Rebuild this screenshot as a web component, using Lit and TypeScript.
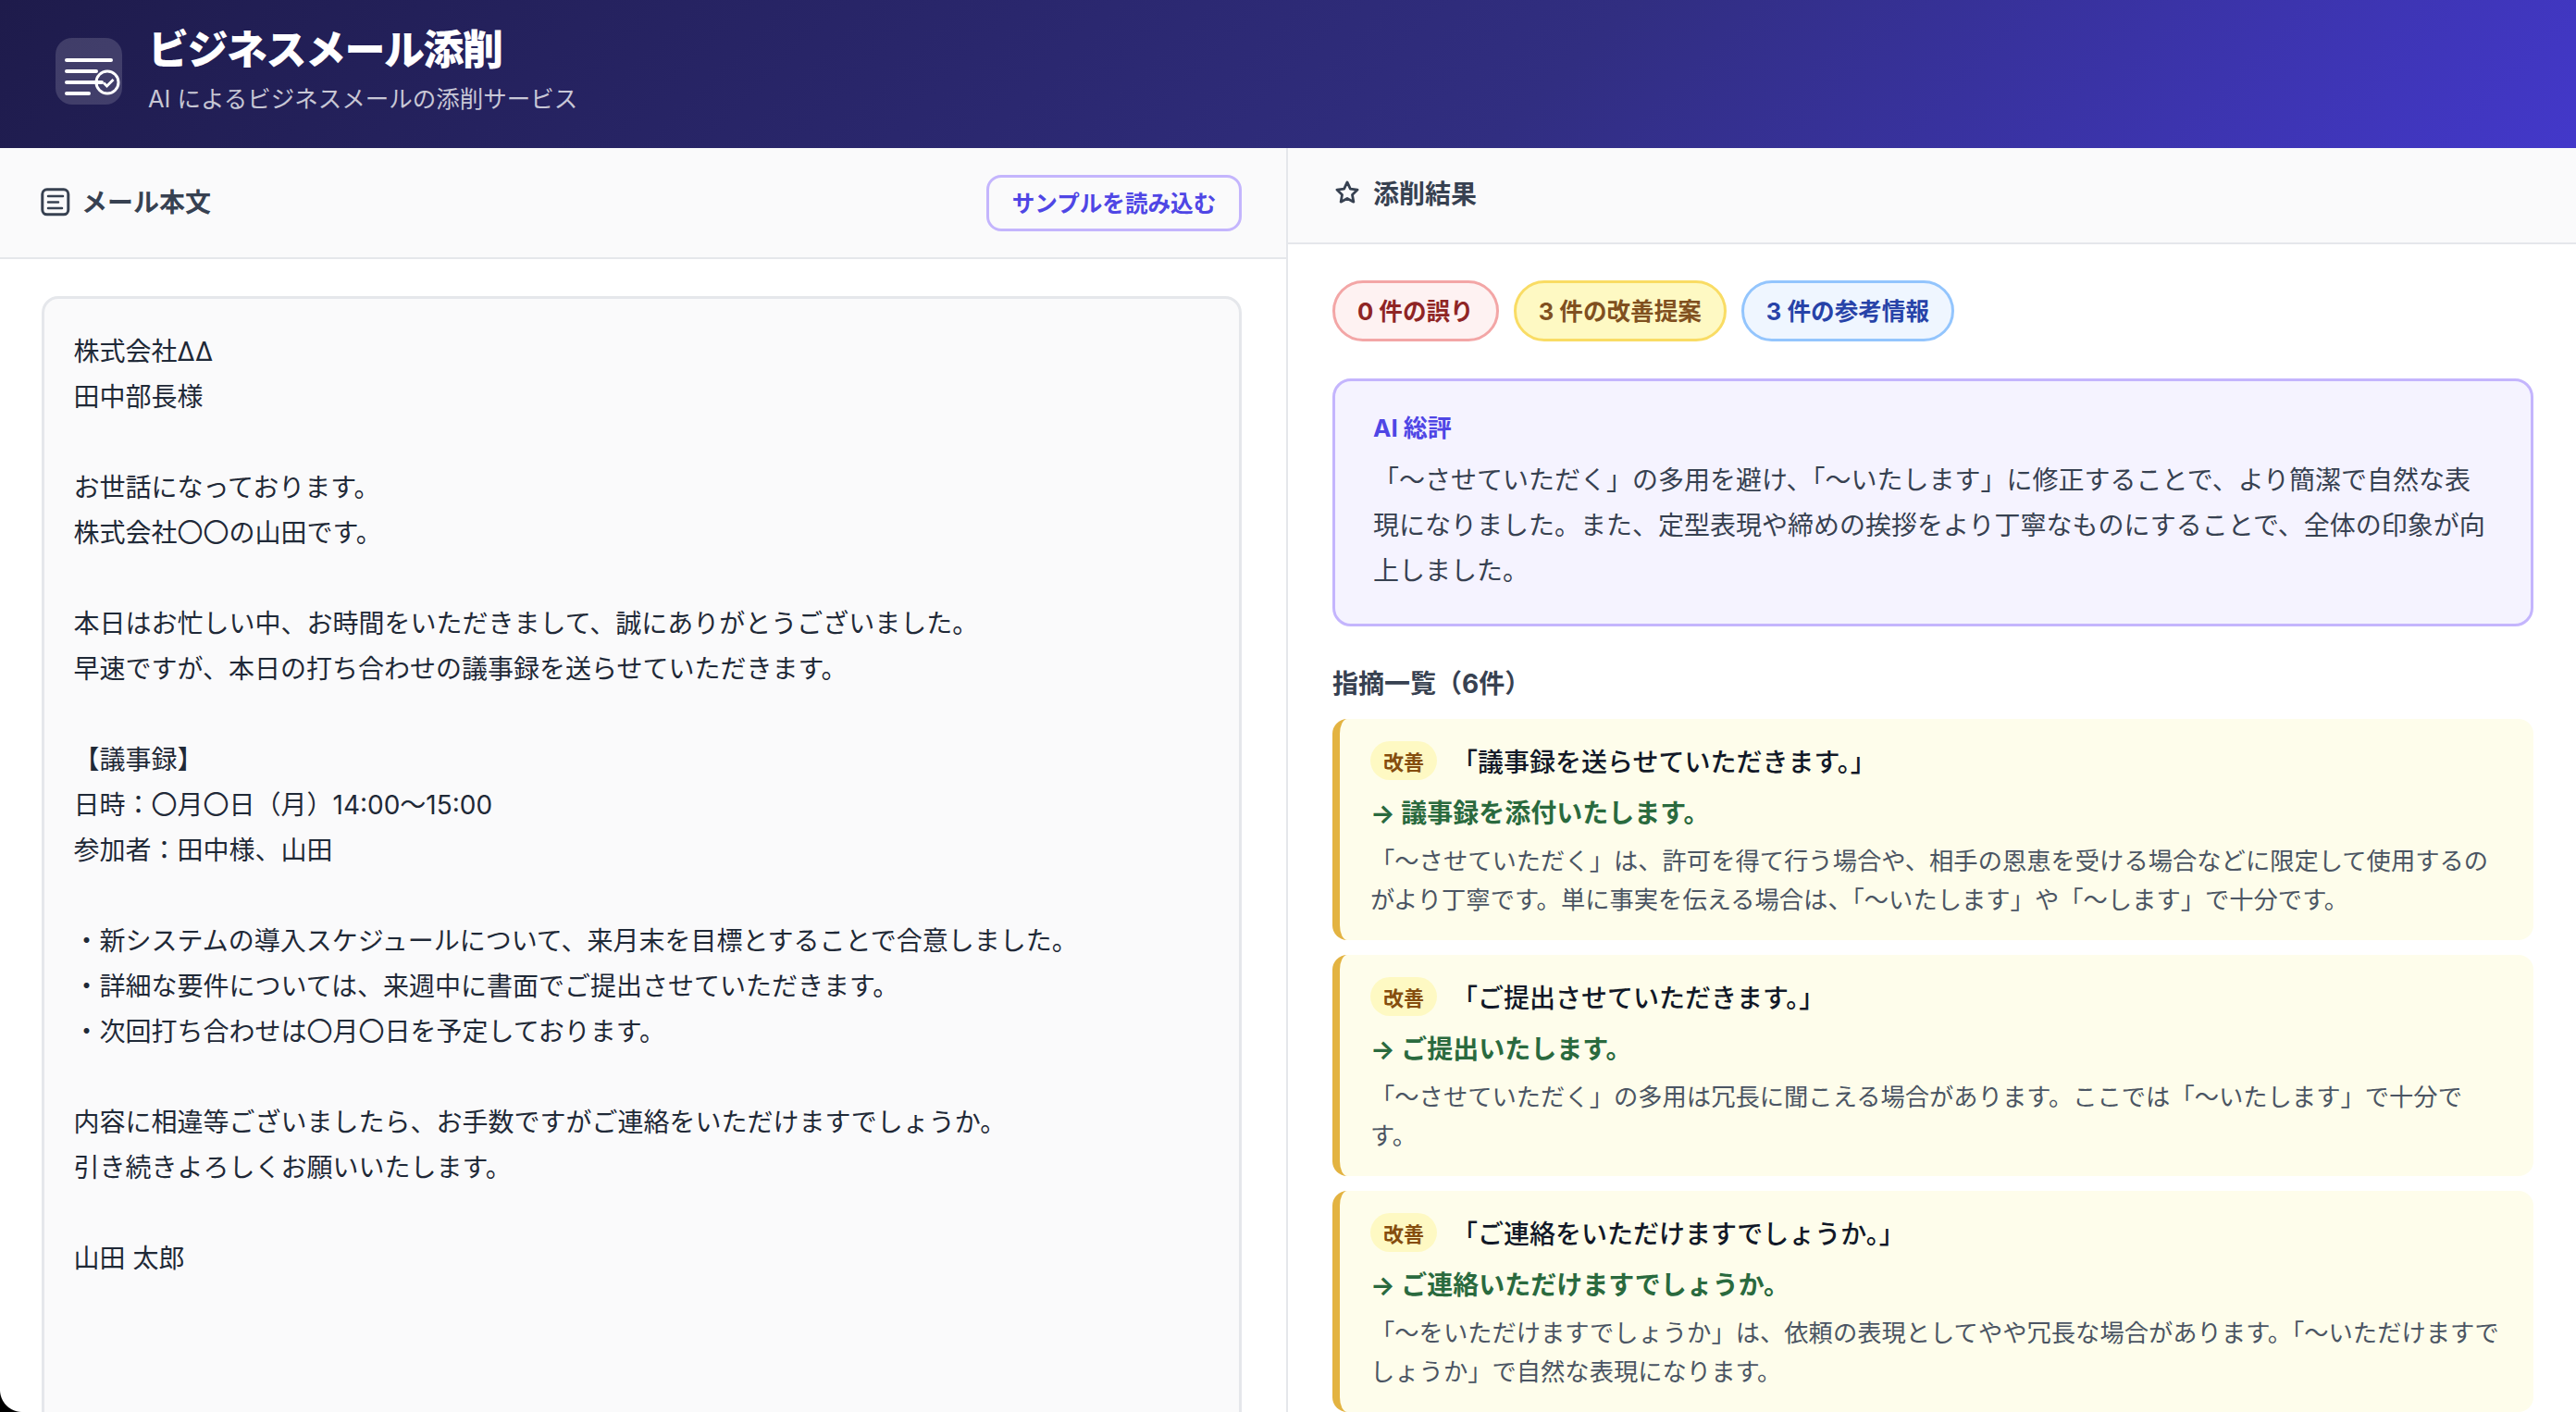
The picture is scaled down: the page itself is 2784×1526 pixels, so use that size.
import { LitElement, html, css } from "lit";
import { customElement } from "lit/decorators.js";

interface Issue {
  original: string;
  fixed: string;
  reason: string;
}

const EMAIL = `株式会社ΔΔ
田中部長様

お世話になっております。
株式会社〇〇の山田です。

本日はお忙しい中、お時間をいただきまして、誠にありがとうございました。
早速ですが、本日の打ち合わせの議事録を送らせていただきます。

【議事録】
日時：〇月〇日（月）14:00〜15:00
参加者：田中様、山田

・新システムの導入スケジュールについて、来月末を目標とすることで合意しました。
・詳細な要件については、来週中に書面でご提出させていただきます。
・次回打ち合わせは〇月〇日を予定しております。

内容に相違等ございましたら、お手数ですがご連絡をいただけますでしょうか。
引き続きよろしくお願いいたします。

山田 太郎`;

const ISSUES: Issue[] = [
  {
    original: "「議事録を送らせていただきます。」",
    fixed: "議事録を添付いたします。",
    reason:
      "「〜させていただく」は、許可を得て行う場合や、相手の恩恵を受ける場合などに限定して使用するのがより丁寧です。単に事実を伝える場合は、「〜いたします」や「〜します」で十分です。",
  },
  {
    original: "「ご提出させていただきます。」",
    fixed: "ご提出いたします。",
    reason:
      "「〜させていただく」の多用は冗長に聞こえる場合があります。ここでは「〜いたします」で十分です。",
  },
  {
    original: "「ご連絡をいただけますでしょうか。」",
    fixed: "ご連絡いただけますでしょうか。",
    reason:
      "「〜をいただけますでしょうか」は、依頼の表現としてやや冗長な場合があります。「〜いただけますでしょうか」で自然な表現になります。",
  },
];

@customElement("app-root")
export class AppRoot extends LitElement {
  static styles = css`
    :host {
      display: block;
      height: 100vh;
      overflow: hidden;
      position: relative;
      background: #fff;
      font-family: Inter, "Noto Sans CJK JP", sans-serif;
      color: #1f2937;
    }

    .header {
      height: 160px;
      box-sizing: border-box;
      display: flex;
      align-items: center;
      gap: 28px;
      padding: 0 60px 6px;
      background: linear-gradient(135deg, #1e1b4b 0%, #312e81 60%, #4338ca 100%);
      color: #fff;
    }

    .logo {
      width: 72px;
      height: 72px;
      border-radius: 18px;
      background: rgba(255, 255, 255, 0.15);
      flex: none;
    }

    .logo svg {
      display: block;
    }

    .brand {
      padding-bottom: 4px;
    }

    .title {
      font-size: 44px;
      line-height: 56px;
      font-weight: 900;
      letter-spacing: -1.5px;
    }

    .subtitle {
      font-size: 25.5px;
      line-height: 36px;
      margin-top: 7px;
      color: rgba(255, 255, 255, 0.75);
    }

    .main {
      display: grid;
      grid-template-columns: 1fr 1fr;
      height: 1366px;
    }

    .panel {
      display: flex;
      flex-direction: column;
      overflow: hidden;
      min-width: 0;
    }

    .panel.left {
      border-right: 2px solid #e5e7eb;
    }

    .panel-head {
      display: flex;
      align-items: center;
      justify-content: space-between;
      background: #fafafb;
      border-bottom: 2px solid #e5e7eb;
      box-sizing: border-box;
      flex: none;
    }

    .left .panel-head {
      height: 120px;
      padding: 0 48px 0 44px;
    }

    .right .panel-head {
      height: 104px;
      padding: 0 48px 6px 50px;
    }

    .head-title {
      display: flex;
      align-items: center;
      gap: 14px;
      font-size: 28px;
      font-weight: 700;
      color: #374151;
    }

    .left .head-title {
      gap: 12px;
    }

    .left .head-title span {
      padding-bottom: 4px;
    }

    .head-title svg {
      display: block;
      flex: none;
    }

    .sample-btn {
      width: 276px;
      height: 61px;
      box-sizing: border-box;
      border: 3px solid #c4b5fd;
      border-radius: 16px;
      background: #fff0;
      color: #4f46e5;
      font: inherit;
      font-size: 24.6px;
      font-weight: 700;
      padding: 0 0 3px;
      cursor: pointer;
    }

    .editor-wrap {
      padding: 40px 48px 0 45px;
      flex: 1;
      min-height: 0;
    }

    .editor {
      box-sizing: border-box;
      min-height: 1400px;
      padding: 33px 32px 32px 31.5px;
      background: #fafafb;
      border: 3px solid #e5e7eb;
      border-radius: 18px;
      font-size: 28px;
      line-height: 49px;
      white-space: pre-wrap;
    }

    .results {
      padding: 39px 46px 0 48px;
    }

    .chips {
      display: flex;
      gap: 16px;
    }

    .chip {
      height: 66px;
      box-sizing: border-box;
      display: flex;
      align-items: center;
      padding: 0 24px 4px;
      border: 3px solid;
      border-radius: 33px;
      font-size: 25.6px;
      font-weight: 700;
    }

    .chip.error {
      background: #fef2f2;
      border-color: #f3a6a6;
      color: #8f2525;
    }

    .chip.warn {
      background: #fef9c3;
      border-color: #f9dc64;
      color: #80501f;
    }

    .chip.info {
      background: #eff6ff;
      border-color: #93c5fd;
      color: #2743a8;
    }

    .summary {
      margin-top: 40px;
      padding: 33px 41px 32px;
      background: #f5f3ff;
      border: 3px solid #c4b5fd;
      border-radius: 20px;
    }

    .summary-label {
      font-size: 26px;
      line-height: 36px;
      font-weight: 700;
      color: #4f46e5;
      margin-bottom: 14px;
    }

    .summary-text {
      font-size: 28px;
      line-height: 49px;
      color: #374151;
    }

    .list-title {
      margin-top: 40px;
      font-size: 28px;
      line-height: 44px;
      font-weight: 700;
      color: #374151;
    }

    .issues {
      display: flex;
      flex-direction: column;
      gap: 16px;
      margin-top: 16px;
    }

    .issue {
      box-sizing: border-box;
      padding: 24px 32px 22px 33px;
      background: #fefdeb;
      border-left: 8px solid #e3b341;
      border-radius: 16px;
    }

    .issue-top {
      display: flex;
      align-items: center;
      gap: 16px;
    }

    .tag {
      height: 42px;
      padding: 0 14px;
      display: flex;
      align-items: center;
      border-radius: 21px;
      background: #fef9c3;
      color: #854d0e;
      font-size: 22px;
      font-weight: 700;
    }

    .original {
      font-size: 28px;
      font-weight: 500;
      color: #111827;
    }

    .fixed {
      margin-top: 14px;
      font-size: 28px;
      line-height: 44px;
      font-weight: 700;
      color: #2a6a3e;
    }

    .reason {
      margin-top: 9px;
      font-size: 26.3px;
      line-height: 42px;
      color: #4b5563;
    }

    .corner {
      position: absolute;
      left: 0;
      bottom: 0;
      width: 24px;
      height: 24px;
      background: radial-gradient(circle at 100% 0, transparent 23.5px, #000 24.5px);
    }
  `;

  render() {
    return html`
      <div class="header">
        <div class="logo">
          <svg width="72" height="72" viewBox="0 0 72 72" fill="none" stroke="#fff">
            <g stroke-width="4" stroke-linecap="round">
              <path d="M12 24h48" />
              <path d="M12 36h32" />
              <path d="M12 48h38" />
              <path d="M12 60h24" />
            </g>
            <circle cx="56" cy="48" r="12" stroke-width="3" />
            <path d="M52 48.5l3.5 3.5 7-7" stroke-width="2.8" />
          </svg>
        </div>
        <div class="brand">
          <div class="title">ビジネスメール添削</div>
          <div class="subtitle">AI によるビジネスメールの添削サービス</div>
        </div>
      </div>
      <div class="main">
        <section class="panel left">
          <div class="panel-head">
            <div class="head-title">
              <svg width="32" height="32" viewBox="0 0 32 32" fill="none" stroke="#374151" stroke-width="3" stroke-linecap="round">
                <rect x="1.8" y="1.8" width="28" height="27" rx="5" />
                <path stroke-width="2.5" d="M8 9h16M8 15.5h11M8 22h15" />
              </svg>
              <span>メール本文</span>
            </div>
            <button class="sample-btn">サンプルを読み込む</button>
          </div>
          <div class="editor-wrap">
            <div class="editor">${EMAIL}</div>
          </div>
        </section>
        <section class="panel right">
          <div class="panel-head">
            <div class="head-title">
              <svg width="28" height="28" viewBox="0 0 24 24" fill="none" stroke="#374151" stroke-width="2.4" stroke-linejoin="round">
                <path d="M12 2.5l2.9 6.1 6.6.9-4.8 4.6 1.2 6.6L12 17.5l-5.9 3.2 1.2-6.6L2.5 9.5l6.6-.9z" />
              </svg>
              添削結果
            </div>
          </div>
          <div class="results">
            <div class="chips">
              <div class="chip error">0 件の誤り</div>
              <div class="chip warn">3 件の改善提案</div>
              <div class="chip info">3 件の参考情報</div>
            </div>
            <div class="summary">
              <div class="summary-label">AI 総評</div>
              <div class="summary-text">「〜させていただく」の多用を避け、「〜いたします」に修正することで、より簡潔で自然な表現になりました。また、定型表現や締めの挨拶をより丁寧なものにすることで、全体の印象が向上しました。</div>
            </div>
            <div class="list-title">指摘一覧（6件）</div>
            <div class="issues">
              ${ISSUES.map(
                (item) => html`
                  <div class="issue">
                    <div class="issue-top">
                      <span class="tag">改善</span>
                      <span class="original">${item.original}</span>
                    </div>
                    <div class="fixed">→ ${item.fixed}</div>
                    <div class="reason">${item.reason}</div>
                  </div>
                `
              )}
            </div>
          </div>
        </section>
      </div>
      <div class="corner"></div>
    `;
  }
}
